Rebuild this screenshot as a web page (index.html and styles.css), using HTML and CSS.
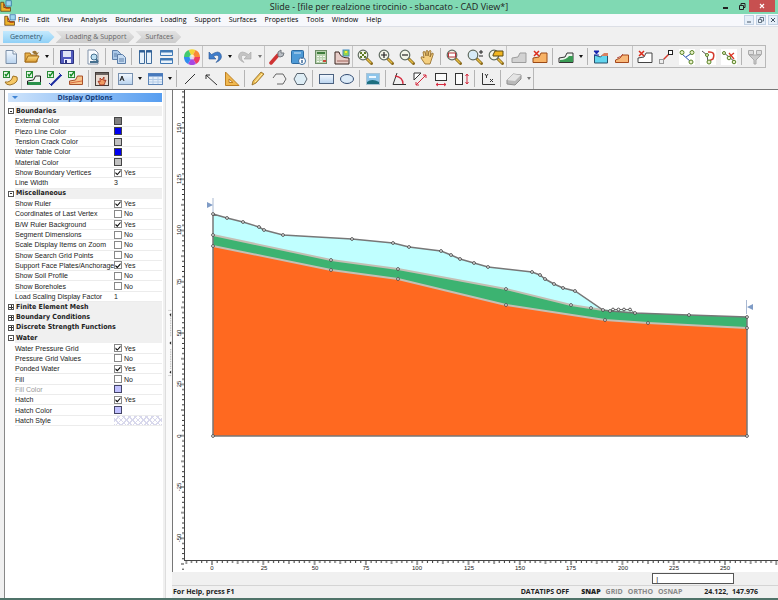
FILE: index.html
```
<!DOCTYPE html>
<html lang="en">
<head>
<meta charset="utf-8">
<title>Slide - CAD View</title>
<link rel="stylesheet" href="styles.css">
</head>
<body>
<svg class="sprite" aria-hidden="true">
  <defs>
    <linearGradient id="sky" x2="0" y2="1"><stop offset="0" stop-color="#f4f9ff"/><stop offset="1" stop-color="#b9d3ee"/></linearGradient>
    <linearGradient id="gold" x2="0" y2="1"><stop offset="0" stop-color="#fbdc8a"/><stop offset="1" stop-color="#dc9c30"/></linearGradient>
  </defs>
  <symbol id="app" viewBox="0 0 16 16"><path d="M1 3h4v7h9v5H1z" fill="#f0b429" stroke="#5b3a12"/><path d="M5 5l3 6h5" fill="none" stroke="#b4380c" stroke-width="1.5"/><rect x="8" y="1" width="7" height="7" fill="#9fd6ee" stroke="#2c6da0"/></symbol>
  <symbol id="new" viewBox="0 0 16 16"><path d="M3 1.500h7l3.500 3.500v9.500H3z" fill="url(#sky)" stroke="#7b8ea6"/><path d="M10 1.500V5h3.500" fill="#fff" stroke="#7b8ea6"/></symbol>
  <symbol id="open" viewBox="0 0 16 16"><path d="M1 13V4h5l1 2h6v7z" fill="#e8b149" stroke="#a36d1c"/><path d="M1 13l3-6h11l-3 6z" fill="url(#gold)" stroke="#a36d1c"/><path d="M8 3q4-3 5 1l2-1-2 3-3-1" fill="#9a7434"/></symbol>
  <symbol id="save" viewBox="0 0 16 16"><path d="M1.500 1.500h13v13h-13z" fill="#5059bd" stroke="#2b327e"/><path d="M4 2h8v6H4z" fill="#dfe4f5"/><path d="M5 10h7v4H5z" fill="#eef"/><path d="M6 11h2v3H6z" fill="#2b327e"/></symbol>
  <symbol id="preview" viewBox="0 0 16 16"><path d="M3 1h7l3 3v11H3z" fill="#fafcff" stroke="#8193aa"/><circle cx="9" cy="8" r="3" fill="#bfe0f2" stroke="#46708f"/><path d="M5 13h8M11 10l2 3" stroke="#46708f" stroke-width="2"/></symbol>
  <symbol id="copy" viewBox="0 0 16 16"><path d="M1.500 1.500h5l3 3v6h-8z" fill="#a9c7e8" stroke="#5c7ea8"/><path d="M6.500 5.500h5l3 3v6h-8z" fill="#c5dbf2" stroke="#5c7ea8"/><path d="M3 5h3M3 7h3M8 10h5M8 12h5" stroke="#5c7ea8"/></symbol>
  <symbol id="cols" viewBox="0 0 16 16"><path d="M2.500 1.500h5v13h-5zM9.500 1.500h5v13h-5z" fill="#e8f2fb" stroke="#3f6c9c"/><path d="M2 2.500h6M9 2.500h6" stroke="#2f5f96" stroke-width="2"/></symbol>
  <symbol id="rows" viewBox="0 0 16 16"><path d="M2.500 1.500h12v5h-12zM2.500 9.500h12v5h-12z" fill="#e8f2fb" stroke="#3f78b4"/><path d="M2 2.500h13M2 10.500h13" stroke="#3f78b4" stroke-width="2"/></symbol>
  <symbol id="wheel" viewBox="0 0 16 16"><path d="M8 8L4.500 1A8 8 0 0 1 11.500 1z" fill="#f3d535"/><path d="M8 8l3.500-7A8 8 0 0 1 16 8z" fill="#f88a34"/><path d="M8 8h8a8 8 0 0 1-4 7z" fill="#ee3d62"/><path d="M8 8l4 7a8 8 0 0 1-8 0z" fill="#a748e2"/><path d="M8 8l-4 7A8 8 0 0 1 0 8z" fill="#318df0"/><path d="M8 8H0a8 8 0 0 1 4.500-7z" fill="#41ca70"/><circle cx="8" cy="8" r="2.500" fill="#fff" opacity=".7"/></symbol>
  <symbol id="undo" viewBox="0 0 16 16"><path d="M2 3v7h7L6.500 7.500q4-2.500 5 0t-2.500 6q7-3 5-8T4.500 5.500z" fill="#3f7ecb" stroke="#2b5594" stroke-width=".6"/></symbol>
  <symbol id="redo" viewBox="0 0 16 16"><path d="M14 3v7H7l2.500-2.500q-4-2.500-5 0t2.500 6Q0 10.500 2 5.500t9.500 0z" fill="#c4c4c4" stroke="#a4a4a4" stroke-width=".6"/></symbol>
  <symbol id="wrench" viewBox="0 0 16 16"><path d="M2 14l7-8" stroke="#cf3434" stroke-width="3.500" stroke-linecap="round"/><path d="M9 7V3l3-2v3h3l-1 3-3 1z" fill="#b9bec4" stroke="#73797f"/></symbol>
  <symbol id="book" viewBox="0 0 16 16"><rect x="1.500" y="1.500" width="12" height="13" rx="1" fill="#4e9ad6" stroke="#2c6aa0"/><path d="M4 4h7" stroke="#cfe6f7"/><circle cx="12" cy="12" r="3.500" fill="#fff" stroke="#3970a5"/><path d="M12 11v3M12 9v1" stroke="#23548a" stroke-width="1.300"/></symbol>
  <symbol id="calc" viewBox="0 0 16 16"><rect x="2.500" y="1.500" width="11" height="13" fill="#b9d3b0" stroke="#6d8d66"/><path d="M4 4h8" stroke="#3f7d3c" stroke-width="2"/><path d="M4 7.500h8M4 10h8M4 12.500h8" stroke="#f7faf4" stroke-dasharray="2 1"/><path d="M10 12h3" stroke="#cf4537" stroke-width="2"/></symbol>
  <symbol id="slope" viewBox="0 0 16 16"><path d="M1 3h4q1 6 10 6v6H1z" fill="#e8cdc8" stroke="#3b2620"/><path d="M3 12h11" stroke="#a0645a"/><rect x="9" y="1" width="6" height="6" fill="#91d350" stroke="#3d8ac0"/><rect x="11" y="2" width="2" height="2" fill="#ffe92c"/></symbol>
  <symbol id="lens" viewBox="0 0 16 16"><path d="M9.500 9.500l5 5" stroke="#8c6c20" stroke-width="3" stroke-linecap="round"/><path d="M10 10l4 4" stroke="#e3bd43" stroke-width="1.500"/><circle cx="6" cy="6" r="4.800" fill="#f3f5e8" stroke="#5f6b60" stroke-width="1.200"/></symbol>
  <symbol id="zfit" viewBox="0 0 16 16"><use href="#lens"/><path d="M3.500 3.500l5 5M8.500 3.500l-5 5M3.500 5V3.500H5M7 3.500h1.500V5M8.500 7v1.500H7M5 8.500H3.500V7" stroke="#5b7821" fill="none"/></symbol>
  <symbol id="zin" viewBox="0 0 16 16"><use href="#lens"/><path d="M3 6h6M6 3v6" stroke="#222" stroke-width="1.200"/></symbol>
  <symbol id="zout" viewBox="0 0 16 16"><use href="#lens"/><path d="M3 6h6" stroke="#222" stroke-width="1.200"/></symbol>
  <symbol id="hand" viewBox="0 0 16 16"><path d="M5 15L1 9q0-2 2-1l1 1-1-6q1-1 2 0l1 4V2q1-1 2 0v5l1-5q2-1 2 0l-1 6 2-4q2 0 1 2l-2 6-1 3z" fill="#f4cf80" stroke="#8d6421" stroke-width=".8"/></symbol>
  <symbol id="zwin" viewBox="0 0 16 16"><use href="#lens"/><rect x="2.500" y="4" width="7" height="4" fill="#fff" stroke="#b4353a"/></symbol>
  <symbol id="zdyn" viewBox="0 0 16 16"><use href="#lens"/><circle cx="6" cy="6" r="4" fill="#d7ecf8"/><path d="M12 3h4M14 1v4M12 7h4" stroke="#222"/></symbol>
  <symbol id="zext" viewBox="0 0 16 16"><use href="#lens"/><path d="M5 6l2-4h8v5H5z" fill="#f1b621" stroke="#5a4a14"/></symbol>
  <symbol id="shape" viewBox="0 0 16 16"><path d="M1 13.500V9l6-1 2-4h6v9.500z"/></symbol>
  <symbol id="xgray" viewBox="0 0 16 16"><use href="#shape" fill="#d2d2d2" stroke="#9d9d9d"/></symbol>
  <symbol id="xdel" viewBox="0 0 16 16"><use href="#shape" fill="#f8b366" stroke="#9a4a16"/><path d="M2 2l5 5M7 2L2 7" stroke="#dc2c1c" stroke-width="1.500"/></symbol>
  <symbol id="xgreen" viewBox="0 0 16 16"><use href="#shape" fill="#eef5ee" stroke="#333"/><path d="M2 11q6 0 9-4h4v6H2z" fill="#3a9b54"/></symbol>
  <symbol id="xwater" viewBox="0 0 16 16"><path d="M1.500 6l6 2 2-2h5v8h-13z" fill="#62d5ee" stroke="#27516b"/><path d="M8 7l3-3h4v3z" fill="#d98060"/><path d="M1 2h5L3.500 5zM1 6h5" fill="#1525b0" stroke="#1525b0"/></symbol>
  <symbol id="xorange" viewBox="0 0 16 16"><path d="M1.500 13.500V11q5-1 7-5h6v7.500z" fill="#f8b879" stroke="#a4481c"/><path d="M3 9q4-1 6-4" stroke="#b64a3a" fill="none"/></symbol>
  <symbol id="xwhite" viewBox="0 0 16 16"><use href="#shape" fill="#fff" stroke="#444"/><path d="M2 2l5 5M7 2L2 7" stroke="#dc2c1c" stroke-width="1.500"/></symbol>
  <symbol id="move" viewBox="0 0 16 16"><path d="M4 12l7-7" stroke="#d0392b" stroke-width="1.500"/><rect x="10.500" y="1.500" width="4" height="4" fill="#fff" stroke="#222"/><rect x="1.500" y="10.500" width="4" height="4" fill="#eee" stroke="#999"/></symbol>
  <symbol id="vadd" viewBox="0 0 16 16"><rect width="16" height="16" fill="#fff"/><path d="M3 5l9 8M7 8l6-4" stroke="#2a53b1"/><g fill="#e9f2c8" stroke="#588226"><circle cx="3" cy="3.500" r="2"/><circle cx="13" cy="3.500" r="2"/><circle cx="12" cy="13" r="2"/></g></symbol>
  <symbol id="vedit" viewBox="0 0 16 16"><rect width="16" height="16" fill="#fff"/><path d="M2 2l5 4 1 7" fill="none" stroke="#555"/><path d="M8 3q8-1 5 7l-4 2" fill="none" stroke="#d43b2e" stroke-width="1.500"/><g fill="#e9f2c8" stroke="#588226"><circle cx="7" cy="6" r="1.500"/><circle cx="9" cy="13" r="2"/></g></symbol>
  <symbol id="vdel" viewBox="0 0 16 16"><rect width="16" height="16" fill="#fff"/><path d="M2 3l12 10" stroke="#555"/><path d="M8 4l5 6M13 4L8 8" stroke="#dc3525" stroke-width="1.300"/><g fill="#e9f2c8" stroke="#588226"><circle cx="3" cy="4" r="1.500"/><circle cx="8" cy="9" r="1.800"/><circle cx="13" cy="13" r="1.800"/></g></symbol>
  <symbol id="funnel" viewBox="0 0 16 16"><path d="M2 6h12l-5 5v4H7v-4z" fill="#ccc" stroke="#aaa"/><path d="M1.500 1.500h5v4h-5zM9.500 1.500h5v4h-5z" fill="#ddd" stroke="#aaa"/></symbol>
  <symbol id="tick" viewBox="0 0 16 16"><rect x=".5" y=".5" width="6" height="6" fill="#e6f5e6" stroke="#2b8a38"/><path d="M2 3l1 2 3-4" fill="none" stroke="#128a22" stroke-width="1.300"/></symbol>
  <symbol id="b1" viewBox="0 0 16 16"><path d="M2 11q6 1 8-6l4 1q2 6-7 8-4 0-5-3z" fill="#f6c866" stroke="#9d7124"/><use href="#tick" width="16" height="16"/></symbol>
  <symbol id="b2" viewBox="0 0 16 16"><path d="M1.500 13.500V10l6-1 2-4h5v8.500z" fill="#eef4ee" stroke="#222"/><path d="M2 11h13v3H2z" fill="#29914a"/><use href="#tick" width="16" height="16"/></symbol>
  <symbol id="b3" viewBox="0 0 16 16"><path d="M4 14L14 4" stroke="#1c2ba0" stroke-width="2"/><path d="M2 12l3 3M12 2l3 3" stroke="#1c2ba0"/><use href="#tick" width="16" height="16"/></symbol>
  <symbol id="b4" viewBox="0 0 16 16"><path d="M1.500 13.500V10l6-1 2-4h5v8.500z" fill="#f7c389" stroke="#a8502a"/><path d="M2 12l12-2" stroke="#d8683e"/><use href="#tick" width="16" height="16"/></symbol>
  <symbol id="dispopt" viewBox="0 0 16 16"><rect x="1.500" y="1.500" width="13" height="13" fill="#e9dcd2" stroke="#443d39"/><path d="M2 3h12" stroke="#6b6461" stroke-width="2"/><path d="M6 14l-2-4 2 1V7l2 2 2-3v4l2-1-2 5z" fill="#ef9b61" stroke="#9d2c1c" stroke-width=".8"/></symbol>
  <symbol id="text" viewBox="0 0 16 16"><rect x="1.500" y="2.500" width="14" height="11" fill="url(#sky)" stroke="#7891b0"/><path d="M3 10l2-5 2 5M4 8h2" fill="none" stroke="#222"/></symbol>
  <symbol id="table" viewBox="0 0 16 16"><rect x="1.500" y="2.500" width="14" height="11" fill="#e5effa" stroke="#5e86b8"/><path d="M1 4h15" stroke="#4779bd" stroke-width="3"/><path d="M2 8.500h13M2 11h13M6 6v7M11 6v7" stroke="#b3cbe6"/></symbol>
  <symbol id="line" viewBox="0 0 16 16"><path d="M3 13L13 3" stroke="#333"/></symbol>
  <symbol id="arrow" viewBox="0 0 16 16"><path d="M3 4l11 10M3 8V4h4" fill="none" stroke="#333"/></symbol>
  <symbol id="setsq" viewBox="0 0 16 16"><path d="M1.500 1v13.500H15zM5 8v3.500h4z" fill="#f0b850" stroke="#bd7f23" fill-rule="evenodd"/></symbol>
  <symbol id="pencil" viewBox="0 0 16 16"><path d="M2 14l1-4 8-9 3 2-8 9z" fill="#efc055" stroke="#8c641f" stroke-width=".8"/><path d="M5 11l7-8" stroke="#fff0b4"/></symbol>
  <symbol id="poly" viewBox="0 0 16 16"><path d="M2 7l3-4h7l3 5-3 5H6" fill="none" stroke="#666"/></symbol>
  <symbol id="hexa" viewBox="0 0 16 16"><path d="M2 8l3-5.500h7L15 8l-3 5.500H5z" fill="#deedf5" stroke="#5b6670"/></symbol>
  <symbol id="rect" viewBox="0 0 16 16"><rect x="1.500" y="3.500" width="14" height="9" fill="url(#sky)" stroke="#4c6280"/></symbol>
  <symbol id="oval" viewBox="0 0 16 16"><ellipse cx="8" cy="8" rx="6.500" ry="4.500" fill="#dcebf8" stroke="#334c72"/></symbol>
  <symbol id="image" viewBox="0 0 16 16"><rect x="1.500" y="2.500" width="13" height="11" fill="#8ec5ea" stroke="#a9c4d6"/><path d="M2 11q5-4 12 0v2H2z" fill="#1d6f80"/><path d="M4 5h7v2H4z" fill="#eef8ff"/></symbol>
  <symbol id="angle" viewBox="0 0 16 16"><path d="M6 2L2 13.500h13" fill="none" stroke="#333"/><path d="M4 5q8 1 8 8" fill="none" stroke="#d52c40" stroke-width="1.300"/></symbol>
  <symbol id="dist" viewBox="0 0 16 16"><path d="M2 9V2h7z" fill="#fff" stroke="#333"/><path d="M4 14L14 4M11 4h3v3M4 11v3h3" fill="none" stroke="#d52c40"/></symbol>
  <symbol id="dimh" viewBox="0 0 16 16"><rect x="2.500" y="2.500" width="11" height="7" fill="#fafafa" stroke="#333"/><path d="M3 13.500h10M5 12l-2 1.500L5 15M11 12l2 1.500-2 1.500" fill="none" stroke="#d52c40"/></symbol>
  <symbol id="dimv" viewBox="0 0 16 16"><rect x="1.500" y="2.500" width="7" height="11" fill="#fafafa" stroke="#333"/><path d="M13 3v10M11.500 5L13 3l1.500 2M11.500 11l1.500 2 1.500-2" fill="none" stroke="#d52c40"/></symbol>
  <symbol id="axes" viewBox="0 0 16 16"><path d="M2.500 2v11.500H15" fill="none" stroke="#333"/><path d="M5 3l1.500 2L8 3M6.500 5v2M10 8l3 3M13 8l-3 3" fill="none" stroke="#333"/></symbol>
  <symbol id="eraser" viewBox="0 0 16 16"><path d="M1 9l6-6 8 1v4l-6 6-8-1z" fill="#b9b9b9" stroke="#8f8f8f"/><path d="M1 9l6-6 8 1-6 6z" fill="#e4e4e4"/></symbol>
</svg>

<header class="titlebar">
  <svg class="mini"><use href="#app"/></svg>
  <h1>Slide - [file per realzione tirocinio - sbancato - CAD View*]</h1>
  <div class="winctl">
    <button aria-label="Minimize"><svg viewBox="0 0 8 8"><path d="M1 6h5" stroke="#222" stroke-width="2"/></svg></button>
    <button aria-label="Restore"><svg viewBox="0 0 8 8"><path d="M3 3V1.500h4v4H5.500M1.500 3.500h4v4h-4z" fill="none" stroke="#222"/></svg></button>
    <button class="close" aria-label="Close"><svg viewBox="0 0 8 8"><path d="M2 2l4 4M6 2L2 6" stroke="#fff" stroke-width="1.200"/></svg></button>
  </div>
</header>

<nav class="menubar">
  <svg class="mini"><use href="#app"/></svg>
  <button>File</button><button>Edit</button><button>View</button><button>Analysis</button><button>Boundaries</button><button>Loading</button><button>Support</button><button>Surfaces</button><button>Properties</button><button>Tools</button><button>Window</button><button>Help</button>
  <div class="docctl">
    <button aria-label="Minimize view"><svg viewBox="0 0 8 8"><path d="M2 6h4" stroke="#456"/></svg></button>
    <button aria-label="Restore view"><svg viewBox="0 0 8 8"><path d="M3 3V1.500h3.500V5H5M1.500 3.500h3v3h-3z" fill="none" stroke="#456" stroke-width=".8"/></svg></button>
    <button aria-label="Close view"><svg viewBox="0 0 8 8"><path d="M2 2l4 4M6 2L2 6" stroke="#456"/></svg></button>
  </div>
</nav>

<nav class="steps">
  <button class="step active">Geometry</button>
  <button class="step">Loading &amp; Support</button>
  <button class="step">Surfaces</button>
</nav>

<div class="toolbar">
  <button aria-label="New"><svg><use href="#new"/></svg></button>
  <button aria-label="Open"><svg><use href="#open"/></svg></button>
  <button class="drop" aria-label="Recent files"></button>
  <i class="sep"></i>
  <button aria-label="Save"><svg><use href="#save"/></svg></button>
  <i class="sep"></i>
  <button aria-label="Print preview"><svg><use href="#preview"/></svg></button>
  <i class="sep"></i>
  <button aria-label="Copy"><svg><use href="#copy"/></svg></button>
  <i class="sep"></i>
  <button aria-label="Tile vertically"><svg><use href="#cols"/></svg></button>
  <button aria-label="Tile horizontally"><svg><use href="#rows"/></svg></button>
  <i class="sep"></i>
  <button aria-label="Colors"><svg><use href="#wheel"/></svg></button>
  <i class="edge"></i>
  <button aria-label="Undo"><svg><use href="#undo"/></svg></button>
  <button class="drop" aria-label="Undo list"></button>
  <button aria-label="Redo"><svg><use href="#redo"/></svg></button>
  <button class="drop dim" aria-label="Redo list"></button>
  <i class="edge"></i>
  <button aria-label="Project settings"><svg><use href="#wrench"/></svg></button>
  <button aria-label="Project summary"><svg><use href="#book"/></svg></button>
  <i class="edge"></i>
  <button aria-label="Compute"><svg><use href="#calc"/></svg></button>
  <button aria-label="Interpret"><svg><use href="#slope"/></svg></button>
  <i class="edge"></i>
  <button aria-label="Zoom all"><svg><use href="#zfit"/></svg></button>
  <button aria-label="Zoom in"><svg><use href="#zin"/></svg></button>
  <button aria-label="Zoom out"><svg><use href="#zout"/></svg></button>
  <button aria-label="Pan"><svg><use href="#hand"/></svg></button>
  <i class="sep"></i>
  <button aria-label="Zoom window"><svg><use href="#zwin"/></svg></button>
  <button aria-label="Zoom dynamic"><svg><use href="#zdyn"/></svg></button>
  <button aria-label="Zoom slope"><svg><use href="#zext"/></svg></button>
  <i class="edge"></i>
  <button aria-label="External boundary"><svg><use href="#xgray"/></svg></button>
  <button aria-label="Delete boundary"><svg><use href="#xdel"/></svg></button>
  <i class="sep"></i>
  <button aria-label="Material boundary"><svg><use href="#xgreen"/></svg></button>
  <button class="drop" aria-label="More boundaries"></button>
  <i class="sep"></i>
  <button aria-label="Water table"><svg><use href="#xwater"/></svg></button>
  <button aria-label="Assign properties"><svg><use href="#xorange"/></svg></button>
  <i class="edge"></i>
  <button aria-label="Delete"><svg><use href="#xwhite"/></svg></button>
  <button aria-label="Move"><svg><use href="#move"/></svg></button>
  <button aria-label="Add vertices"><svg><use href="#vadd"/></svg></button>
  <button aria-label="Edit vertices"><svg><use href="#vedit"/></svg></button>
  <button aria-label="Delete vertices"><svg><use href="#vdel"/></svg></button>
  <i class="sep"></i>
  <button aria-label="Filter"><svg><use href="#funnel"/></svg></button>
</div>

<div class="toolbar second">
  <button aria-label="Surface options"><svg><use href="#b1"/></svg></button>
  <i class="edge"></i>
  <button aria-label="Show external"><svg><use href="#b2"/></svg></button>
  <button aria-label="Show support"><svg><use href="#b3"/></svg></button>
  <button aria-label="Show materials"><svg><use href="#b4"/></svg></button>
  <i class="sep"></i>
  <button class="on" aria-label="Display options"><svg><use href="#dispopt"/></svg></button>
  <i class="edge"></i>
  <button aria-label="Text box"><svg><use href="#text"/></svg></button>
  <button class="drop" aria-label="Text options"></button>
  <button aria-label="Table"><svg><use href="#table"/></svg></button>
  <button class="drop" aria-label="Table options"></button>
  <i class="sep"></i>
  <button aria-label="Line"><svg><use href="#line"/></svg></button>
  <button aria-label="Arrow"><svg><use href="#arrow"/></svg></button>
  <button aria-label="Set square"><svg><use href="#setsq"/></svg></button>
  <i class="sep"></i>
  <button aria-label="Pencil"><svg><use href="#pencil"/></svg></button>
  <button aria-label="Polyline"><svg><use href="#poly"/></svg></button>
  <button aria-label="Polygon"><svg><use href="#hexa"/></svg></button>
  <i class="sep"></i>
  <button aria-label="Rectangle"><svg><use href="#rect"/></svg></button>
  <button aria-label="Ellipse"><svg><use href="#oval"/></svg></button>
  <i class="sep"></i>
  <button aria-label="Image"><svg><use href="#image"/></svg></button>
  <i class="sep"></i>
  <button aria-label="Angle"><svg><use href="#angle"/></svg></button>
  <button aria-label="Distance"><svg><use href="#dist"/></svg></button>
  <button aria-label="Horizontal dimension"><svg><use href="#dimh"/></svg></button>
  <button aria-label="Vertical dimension"><svg><use href="#dimv"/></svg></button>
  <i class="sep"></i>
  <button aria-label="Axes"><svg><use href="#axes"/></svg></button>
  <i class="sep"></i>
  <button aria-label="Eraser"><svg><use href="#eraser"/></svg></button>
  <button class="drop dim" aria-label="Eraser options"></button>
</div>

<main class="work">
  <aside class="panel">
    <h2 class="panel-title">Display Options</h2>
    <div class="props">
      <h3><button class="fold" aria-label="Collapse"></button>Boundaries</h3>
      <div class="row"><span>External Color</span><button class="swatch gray" aria-label="External Color"></button></div>
      <div class="row"><span>Piezo Line Color</span><button class="swatch blue" aria-label="Piezo Line Color"></button></div>
      <div class="row"><span>Tension Crack Color</span><button class="swatch silver" aria-label="Tension Crack Color"></button></div>
      <div class="row"><span>Water Table Color</span><button class="swatch blue" aria-label="Water Table Color"></button></div>
      <div class="row"><span>Material Color</span><button class="swatch silver" aria-label="Material Color"></button></div>
      <label class="row"><span>Show Boundary Vertices</span><input type="checkbox" checked>Yes</label>
      <div class="row"><span>Line Width</span>3</div>
      <h3><button class="fold" aria-label="Collapse"></button>Miscellaneous</h3>
      <label class="row"><span>Show Ruler</span><input type="checkbox" checked>Yes</label>
      <label class="row"><span>Coordinates of Last Vertex</span><input type="checkbox">No</label>
      <label class="row"><span>B/W Ruler Background</span><input type="checkbox" checked>Yes</label>
      <label class="row"><span>Segment Dimensions</span><input type="checkbox">No</label>
      <label class="row"><span>Scale Display Items on Zoom</span><input type="checkbox">No</label>
      <label class="row"><span>Show Search Grid Points</span><input type="checkbox">No</label>
      <label class="row"><span>Support Face Plates/Anchorage</span><input type="checkbox" checked>Yes</label>
      <label class="row"><span>Show Soil Profile</span><input type="checkbox">No</label>
      <label class="row"><span>Show Boreholes</span><input type="checkbox">No</label>
      <div class="row"><span>Load Scaling Display Factor</span>1</div>
      <h3><button class="fold shut" aria-label="Expand"></button>Finite Element Mesh</h3>
      <h3><button class="fold shut" aria-label="Expand"></button>Boundary Conditions</h3>
      <h3><button class="fold shut" aria-label="Expand"></button>Discrete Strength Functions</h3>
      <h3><button class="fold" aria-label="Collapse"></button>Water</h3>
      <label class="row"><span>Water Pressure Grid</span><input type="checkbox" checked>Yes</label>
      <label class="row"><span>Pressure Grid Values</span><input type="checkbox">No</label>
      <label class="row"><span>Ponded Water</span><input type="checkbox" checked>Yes</label>
      <label class="row"><span>Fill</span><input type="checkbox">No</label>
      <div class="row off"><span>Fill Color</span><button class="swatch lilac" aria-label="Fill Color"></button></div>
      <label class="row"><span>Hatch</span><input type="checkbox" checked>Yes</label>
      <div class="row"><span>Hatch Color</span><button class="swatch lilac" aria-label="Hatch Color"></button></div>
      <div class="row"><span>Hatch Style</span><button class="hatch" aria-label="Hatch Style"></button></div>
    </div>
  </aside>
  <div class="splitter"><svg viewBox="0 0 7 78"><path d="M3 1h4M3 77h4M5.500 8v24M5.500 46v24" stroke="#999" stroke-dasharray="1 1"/><path d="M6 4v4L4 6zM6 37v4l-2-2zM6 71v4l-2-2z" fill="#222"/></svg></div>

  <section class="view">
    <svg class="vruler">
      <defs><pattern id="vt" width="11" height="51.300" y="37.900" patternUnits="userSpaceOnUse"><path d="M7 0h4M7 51.300h4M9 5.130h2M9 10.260h2M9 15.390h2M9 20.520h2M8 25.650h3M9 30.780h2M9 35.910h2M9 41.040h2M9 46.170h2" stroke="#333"/></pattern></defs>
      <rect width="11" height="100%" fill="url(#vt)"/>
      <g class="tick-label">
        <text transform="translate(8 38) rotate(-90)">150</text><text transform="translate(8 89) rotate(-90)">125</text><text transform="translate(8 140) rotate(-90)">100</text><text transform="translate(8 192) rotate(-90)">75</text><text transform="translate(8 243) rotate(-90)">50</text><text transform="translate(8 294) rotate(-90)">25</text><text transform="translate(8 346) rotate(-90)">0</text><text transform="translate(8 397) rotate(-90)">-25</text><text transform="translate(8 448) rotate(-90)">-50</text>
      </g>
    </svg>
    <svg class="plot">
      <g transform="translate(-185 -90)">
        <path fill="#c0ffff" d="M213 214L227 218 243 222 259 227 264 230 283 235 352 239 393 243 409 247 441 251 451 255 460 259 474 263 488 267 532 272 540 275 545 279 554 284 563 288 575 291 603 310 591 308 571 305 506 289 398 269 331 260 213 235z"/>
        <path fill="#d2f4e6" d="M603 310L613 309H630L635 313H610z"/>
        <path fill="#3cb371" d="M213 235L331 260 398 269 506 289 571 305 603 310 635 313 689 315 747 317V328L648 323 605 320 506 305 398 279 331 270 213 246z"/>
        <path fill="#ff6920" d="M213 246L331 270 398 279 506 305 605 320 648 323 747 328V436H213z"/>
        <path fill="none" stroke="#c4bfb4" stroke-width="2" d="M213 235L331 260 398 269 506 289 571 305 603 310M213 246L331 270 398 279 506 305 605 320 648 323 747 328"/>
        <path fill="none" stroke="#777" stroke-width="1.500" d="M213 214L227 218 243 222 259 227 264 230 283 235 352 239 393 243 409 247 441 251 451 255 460 259 474 263 488 267 532 272 540 275 545 279 554 284 563 288 575 291 603 310 610 311 635 313 689 315 747 317V436H213z"/>
        <path fill="none" stroke="#777" d="M610 311L613 309.500H630L635 313"/>
        <g class="nodes">
          <circle cx="213" cy="214" r="1.400"/><circle cx="227" cy="218" r="1.400"/><circle cx="243" cy="222" r="1.400"/><circle cx="259" cy="227" r="1.400"/><circle cx="264" cy="230" r="1.400"/><circle cx="283" cy="235" r="1.400"/><circle cx="352" cy="239" r="1.400"/><circle cx="393" cy="243" r="1.400"/><circle cx="409" cy="247" r="1.400"/><circle cx="441" cy="251" r="1.400"/><circle cx="451" cy="255" r="1.400"/><circle cx="460" cy="259" r="1.400"/><circle cx="474" cy="263" r="1.400"/><circle cx="488" cy="267" r="1.400"/><circle cx="532" cy="272" r="1.400"/><circle cx="540" cy="275" r="1.400"/><circle cx="545" cy="279" r="1.400"/><circle cx="554" cy="284" r="1.400"/><circle cx="563" cy="288" r="1.400"/><circle cx="575" cy="291" r="1.400"/><circle cx="603" cy="310" r="1.400"/><circle cx="610" cy="311" r="1.400"/><circle cx="613" cy="309.500" r="1.400"/><circle cx="618.500" cy="309.500" r="1.400"/><circle cx="624" cy="309.500" r="1.400"/><circle cx="630" cy="309.500" r="1.400"/><circle cx="635" cy="313" r="1.400"/><circle cx="689" cy="315" r="1.400"/><circle cx="747" cy="317" r="1.400"/>
          <circle cx="213" cy="235" r="1.400"/><circle cx="331" cy="260" r="1.400"/><circle cx="398" cy="269" r="1.400"/><circle cx="506" cy="289" r="1.400"/><circle cx="571" cy="305" r="1.400"/><circle cx="591" cy="308" r="1.400"/>
          <circle cx="213" cy="246" r="1.400"/><circle cx="331" cy="270" r="1.400"/><circle cx="398" cy="279" r="1.400"/><circle cx="506" cy="305" r="1.400"/><circle cx="605" cy="320" r="1.400"/><circle cx="648" cy="323" r="1.400"/><circle cx="747" cy="328" r="1.400"/><circle cx="747" cy="436" r="1.400"/><circle cx="213" cy="436" r="1.400"/>
        </g>
        <path d="M213 198v14M746.500 300v14" stroke="#a9b9d2"/>
        <path d="M207 202l6 3-6 3zM753 304l-6 3 6 3z" fill="#7f9cc6"/>
      </g>
    </svg>
    <svg class="hruler">
      <defs><pattern id="ht" width="51.300" height="11" x="28" patternUnits="userSpaceOnUse"><path d="M0 0v4M51.300 0v4M5.130 0v2M10.260 0v2M15.390 0v2M20.520 0v2M25.650 0v3M30.780 0v2M35.910 0v2M41.040 0v2M46.170 0v2" stroke="#333"/></pattern></defs>
      <rect width="100%" height="11" fill="url(#ht)"/>
      <g class="tick-label">
        <text x="28" y="9">0</text><text x="80" y="9">25</text><text x="131" y="9">50</text><text x="182" y="9">75</text><text x="233" y="9">100</text><text x="285" y="9">125</text><text x="336" y="9">150</text><text x="387" y="9">175</text><text x="439" y="9">200</text><text x="490" y="9">225</text><text x="541" y="9">250</text>
      </g>
    </svg>
    <div class="command"><input type="text" value="|" aria-label="Command"></div>
    <footer class="status">
      <span class="help">For Help, press F1</span>
      <span class="tips">DATATIPS OFF</span>
      <span class="modes"><b>SNAP</b><span>GRID</span><span>ORTHO</span><span>OSNAP</span></span>
      <span class="coords">24.122,&nbsp; 147.976</span>
    </footer>
  </section>
</main>
<div class="desktop-edge"></div>
</body>
</html>
```
FILE: styles.css
```
* { box-sizing: border-box; }

body {
  margin: 0;
  height: 100vh;
  display: flex;
  flex-direction: column;
  background: #f0f0f0;
  color: #222;
  font: 7px/12px "Open Sans", sans-serif;
  overflow: hidden;
}

button {
  padding: 0;
  border: 0;
  background: none;
  color: inherit;
  font: inherit;
  display: flex;
  align-items: center;
  justify-content: center;
}

.sprite { position: absolute; width: 0; height: 0; }
.mini { width: 12px; height: 12px; }

/* Title bar */
.titlebar {
  flex: none;
  display: grid;
  grid-template-columns: 60px 1fr 60px;
  height: 14px;
  background: #80d9b3;
}
.titlebar h1 {
  margin: 0;
  font-size: 9px;
  line-height: 14px;
  font-weight: 400;
  text-align: center;
}
.winctl { display: flex; justify-content: flex-end; padding-right: 3px; height: 12px; }
.winctl button { width: 16px; }
.winctl .close { width: 26px; background: #c75050; }
.winctl svg { width: 8px; height: 8px; }

/* Menu bar */
.menubar {
  flex: none;
  display: flex;
  align-items: center;
  gap: 8px;
  height: 13px;
  padding-left: 4px;
  color: #000;
  background: #f7f8fc;
  border-bottom: 1px solid #dcdfe6;
}
.menubar .mini { margin-right: -6px; }
.docctl { display: flex; gap: 2px; margin-left: auto; }
.docctl button { width: 10px; height: 10px; border: 1px solid #c2d2e4; background: #e6eff9; }
.docctl svg { width: 8px; height: 8px; }

/* Workflow steps */
.steps { flex: none; display: flex; gap: 1px; height: 18px; padding: 4px 3px 2px; }
.step {
  padding: 0 8px 0 10px;
  color: #666;
  background: linear-gradient(#e2e2e2, #cbcbcb);
  clip-path: polygon(0 0, calc(100% - 6px) 0, 100% 50%, calc(100% - 6px) 100%, 0 100%, 6px 50%);
}
.step.active {
  padding: 0 12px 0 7px;
  color: #31566e;
  background: linear-gradient(#c4e9fd, #8fd0f6);
  clip-path: polygon(0 0, calc(100% - 6px) 0, 100% 50%, calc(100% - 6px) 100%, 0 100%);
}

/* Toolbars */
.toolbar {
  flex: none;
  display: flex;
  align-self: flex-start;
  height: 23px;
  border: 1px solid #b8b8b8;
  border-left: 0;
}
.toolbar.second { height: 21px; border-top: 0; border-bottom: 0; }
.toolbar button { width: 21px; }
.toolbar svg { width: 16px; height: 16px; }
.toolbar .on { background: #e2e2e2; }
.toolbar .drop { width: 9px; }
.drop::after { content: ""; border: 2px solid transparent; border-top: 3px solid #111; border-bottom: 0; }
.drop.dim::after { border-top-color: #777; }
.sep { width: 5px; padding: 2px 0; }
.sep::before { content: ""; display: block; height: 100%; margin-left: 2px; border-left: 1px solid #b4b4b4; }
.edge { width: 2px; border-left: 1px solid #c4c4c4; }

/* Work area */
.work { flex: 1; display: flex; min-height: 0; border-top: 1px solid #777; }

.panel {
  width: 162px;
  margin-left: 4px;
  padding: 3px 3px 0;
  border-left: 1px solid #888;
  border-right: 1px solid #ddd;
  background: linear-gradient(90deg, #fff 158px, #f0f0f0 158px);
}
.panel-title {
  margin: 0 0 4px;
  height: 9px;
  font-size: 7px;
  line-height: 9px;
  text-align: center;
  color: #103a78;
  background: linear-gradient(90deg, #cfe4fb, #569df0);
  position: relative;
}
.panel-title::before {
  content: "";
  position: absolute;
  left: 4px;
  top: 3px;
  border: 3px solid transparent;
  border-top-color: #3f84d4;
  border-bottom: 0;
}
.props {
  display: grid;
  grid-auto-rows: 1fr;
  height: 320px;
  font: 7px/9px "Liberation Sans", sans-serif;
}
.props h3 {
  display: flex;
  align-items: center;
  gap: 2px;
  margin: 0;
  font: 700 7px/9px "DejaVu Sans Condensed", "DejaVu Sans", sans-serif;
  background: linear-gradient(90deg, #fff 7px, #f0f0f0 7px);
}
.row {
  display: flex;
  align-items: center;
  gap: 2px;
  margin-left: 7px;
  border-bottom: 1px solid #ececec;
}
.row > span { width: 97px; white-space: nowrap; }
.row.off { color: #999; }
.fold { width: 6px; height: 6px; border: 1px solid #555; background: linear-gradient(#333, #333) center / 2px 1px no-repeat #fff; }
.fold.shut { background: linear-gradient(#333, #333) center / 4px 1px no-repeat, linear-gradient(#333, #333) center / 1px 4px no-repeat #fff; }
.swatch { width: 8px; height: 8px; border: 1px solid #444; }
.gray { background: #808080; }
.blue { background: #0000f0; }
.silver { background: #c0c0c0; }
.lilac { background: #c0c0ff; border-color: #446; }
.hatch {
  flex: 1;
  height: 9px;
  background:
    repeating-linear-gradient(45deg, #d8d8ec 0 1px, transparent 1px 4px),
    repeating-linear-gradient(-45deg, #d8d8ec 0 1px, transparent 1px 4px);
}
.row input {
  appearance: none;
  width: 8px;
  height: 8px;
  margin: 0;
  border: 1px solid #888;
  background: #fff;
}
.row input:checked::before {
  content: "";
  display: block;
  width: 6px;
  height: 6px;
  background: #111;
  clip-path: polygon(8% 42%, 40% 68%, 92% 8%, 92% 36%, 40% 96%, 8% 70%);
}

.splitter { width: 6px; background: #fafafa; display: flex; align-items: flex-start; padding-top: 214px; }
.splitter svg { width: 7px; height: 78px; }

/* Drawing view */
.view {
  flex: 1;
  min-width: 0;
  display: grid;
  grid-template-columns: 12px 1fr;
  grid-template-rows: 1fr 11px 14px 12px;
}
.view > svg { width: 100%; height: 100%; background: #fff; }
.view > .vruler { grid-row: 1 / 3; border-left: 1px solid #777; }
.plot { border-left: 1px solid #444; border-bottom: 1px solid #444; min-height: 0; }
.hruler { grid-column: 2; }
.tick-label { font: 6px "Liberation Sans", sans-serif; text-anchor: middle; fill: #222; }
.nodes { fill: #fff; stroke: #333; stroke-width: .8px; }

.command {
  grid-column: 1 / -1;
  display: flex;
  justify-content: flex-end;
  padding: 1px 44px 1px 0;
  border-bottom: 1px solid #d4d4d4;
}
.command input { width: 82px; padding: 0 2px; border: 1px solid #555; background: #fff; font: 8px/9px "Open Sans", sans-serif; }

.status {
  grid-column: 1 / -1;
  display: flex;
  align-items: center;
  padding: 0 20px 0 1px;
  font-weight: 700;
}
.help { flex: 1; }
.tips { margin-right: 12px; }
.modes { display: flex; gap: 5px; color: #888; }
.modes b { color: #222; }
.coords { margin-left: 22px; }

.desktop-edge { flex: none; height: 2px; background: #4f7369; }
```
